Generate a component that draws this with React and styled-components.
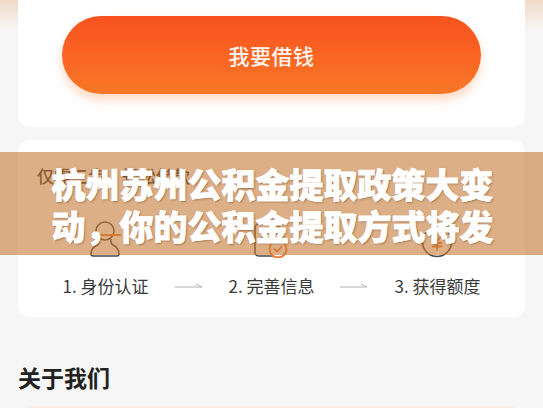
import React from "react";
import styled, { createGlobalStyle } from "styled-components";

const GlobalStyle = createGlobalStyle`
  html, body {
    margin: 0;
    padding: 0;
  }
  body {
    background: linear-gradient(to bottom, #f0d9c7 0px, #f6f6f6 30px) no-repeat, #f6f6f6;
    font-family: "Noto Sans CJK SC", "Noto Sans", sans-serif;
    overflow: hidden;
  }
`;

const steps = [
  { label: "1. 身份认证", icon: "person" },
  { label: "2. 完善信息", icon: "doc" },
  { label: "3. 获得额度", icon: "yen" },
];

const StepIcon = ({ type }) => {
  if (type === "person") {
    return (
      <svg width="36" height="40" viewBox="0 0 36 40">
        <circle cx="17" cy="13" r="9" fill="none" stroke="#4a4a4a" strokeWidth="1.6" />
        <path
          d="M11 21 C11 24 12 25 9 27 C5 29 3 32 3 36 Q3 38 5 38 L29 38 Q31 38 31 36 C31 32 29 29 25 27 C22 25 23 24 23 21"
          fill="none"
          stroke="#4a4a4a"
          strokeWidth="1.6"
          strokeLinejoin="round"
        />
        <line x1="6" y1="17" x2="33" y2="17" stroke="#f07a2e" strokeWidth="2" />
      </svg>
    );
  }
  if (type === "doc") {
    return (
      <svg width="36" height="40" viewBox="0 0 36 40">
        <rect x="2" y="6" width="24" height="32" rx="4" fill="none" stroke="#4a4a4a" strokeWidth="1.6" />
        <line x1="8" y1="14" x2="20" y2="14" stroke="#4a4a4a" strokeWidth="1.6" />
        <line x1="8" y1="20" x2="16" y2="20" stroke="#4a4a4a" strokeWidth="1.6" />
        <circle cx="25" cy="31" r="8.5" fill="#fff" stroke="#f07a2e" strokeWidth="1.8" />
        <path d="M21.5 31 L24.2 33.6 L28.6 28.6" fill="none" stroke="#f07a2e" strokeWidth="1.8" strokeLinecap="round" strokeLinejoin="round" />
      </svg>
    );
  }
  return (
    <svg width="36" height="40" viewBox="0 0 36 40">
      <circle cx="18" cy="24" r="14.5" fill="none" stroke="#4a4a4a" strokeWidth="1.6" />
      <path d="M13 17 L18 23 L23 17 M18 23 L18 32 M13.5 25 L22.5 25 M13.5 28.5 L22.5 28.5" fill="none" stroke="#f07a2e" strokeWidth="1.8" strokeLinecap="round" />
    </svg>
  );
};

const Arrow = () => (
  <ArrowBox>
    <svg width="28" height="6" viewBox="0 0 28 6">
      <line x1="0" y1="4" x2="27" y2="4" stroke="#bdbdbd" strokeWidth="1.2" />
      <line x1="21" y1="1" x2="27" y2="4" stroke="#bdbdbd" strokeWidth="1.2" />
    </svg>
  </ArrowBox>
);

const App = () => {
  return (
    <Page>
      <GlobalStyle />
      <BorrowCard>
        <BorrowButton>我要借钱</BorrowButton>
      </BorrowCard>

      <StepsCard>
        <StepsTitle>仅需三步，轻松借款</StepsTitle>
        <StepsRow>
          {steps.map((s, i) => (
            <React.Fragment key={s.label}>
              {i > 0 && <Arrow />}
              <Step>
                <StepIcon type={s.icon} />
                <StepLabel>{s.label}</StepLabel>
              </Step>
            </React.Fragment>
          ))}
        </StepsRow>
      </StepsCard>

      <SectionTitle>关于我们</SectionTitle>
      <AboutCard />

      <Headline>
        <HeadlineText>杭州苏州公积金提取政策大变动，你的公积金提取方式将发</HeadlineText>
      </Headline>
    </Page>
  );
};

export default App;

// Styled part

const Page = styled.div`
  position: relative;
  width: 543px;
  height: 408px;
  overflow: hidden;
`;

const BorrowCard = styled.div`
  margin: -20px 18px 0;
  padding: 36px 44px 33px;
  background: #fff;
  border-radius: 12px;
`;

const BorrowButton = styled.div`
  height: 78px;
  border-radius: 39px;
  background: linear-gradient(to bottom, #f9521f, #f97726);
  box-shadow: 0 6px 10px rgba(249, 120, 40, 0.28);
  display: flex;
  align-items: center;
  justify-content: center;
  color: #fff6f0;
  font-size: 21px;
  font-weight: 500;
  letter-spacing: 0.5px;
`;

const StepsCard = styled.div`
  margin: 13px 18px 0;
  padding: 24px 19px 19px;
  background: #fff;
  border-radius: 12px;
`;

const StepsTitle = styled.div`
  font-size: 17px;
  line-height: 24px;
  font-weight: 500;
  color: #333;
`;

const StepsRow = styled.div`
  margin-top: 30px;
  display: flex;
  justify-content: center;
  align-items: flex-end;
  gap: 26px;
`;

const Step = styled.div`
  display: flex;
  flex-direction: column;
  align-items: center;
  gap: 16px;
`;

const StepLabel = styled.div`
  font-size: 17px;
  line-height: 24px;
  color: #3a3a3a;
  white-space: nowrap;
`;

const ArrowBox = styled.div`
  display: flex;
  margin-bottom: 9px;
`;

const SectionTitle = styled.div`
  margin: 45px 18px 0;
  font-size: 23px;
  line-height: 30px;
  font-weight: 700;
  color: #222;
`;

const AboutCard = styled.div`
  margin: 14px 22px 0;
  height: 80px;
  border-radius: 12px;
  background: linear-gradient(to bottom, #fcede3, #fff);
`;

const Headline = styled.div`
  position: absolute;
  top: 152px;
  left: 0;
  right: 0;
  height: 103px;
  padding-top: 11px;
  box-sizing: border-box;
  background: rgba(197, 122, 53, 0.6);
  display: flex;
  justify-content: center;
`;

const HeadlineText = styled.div`
  width: 442px;
  margin-left: 2px;
  font-size: 34px;
  line-height: 42px;
  font-weight: 900;
  color: #fff;
  -webkit-text-stroke: 0.8px #fff;
  text-shadow: 1px 1px 2px rgba(80, 40, 10, 0.5);
`;
